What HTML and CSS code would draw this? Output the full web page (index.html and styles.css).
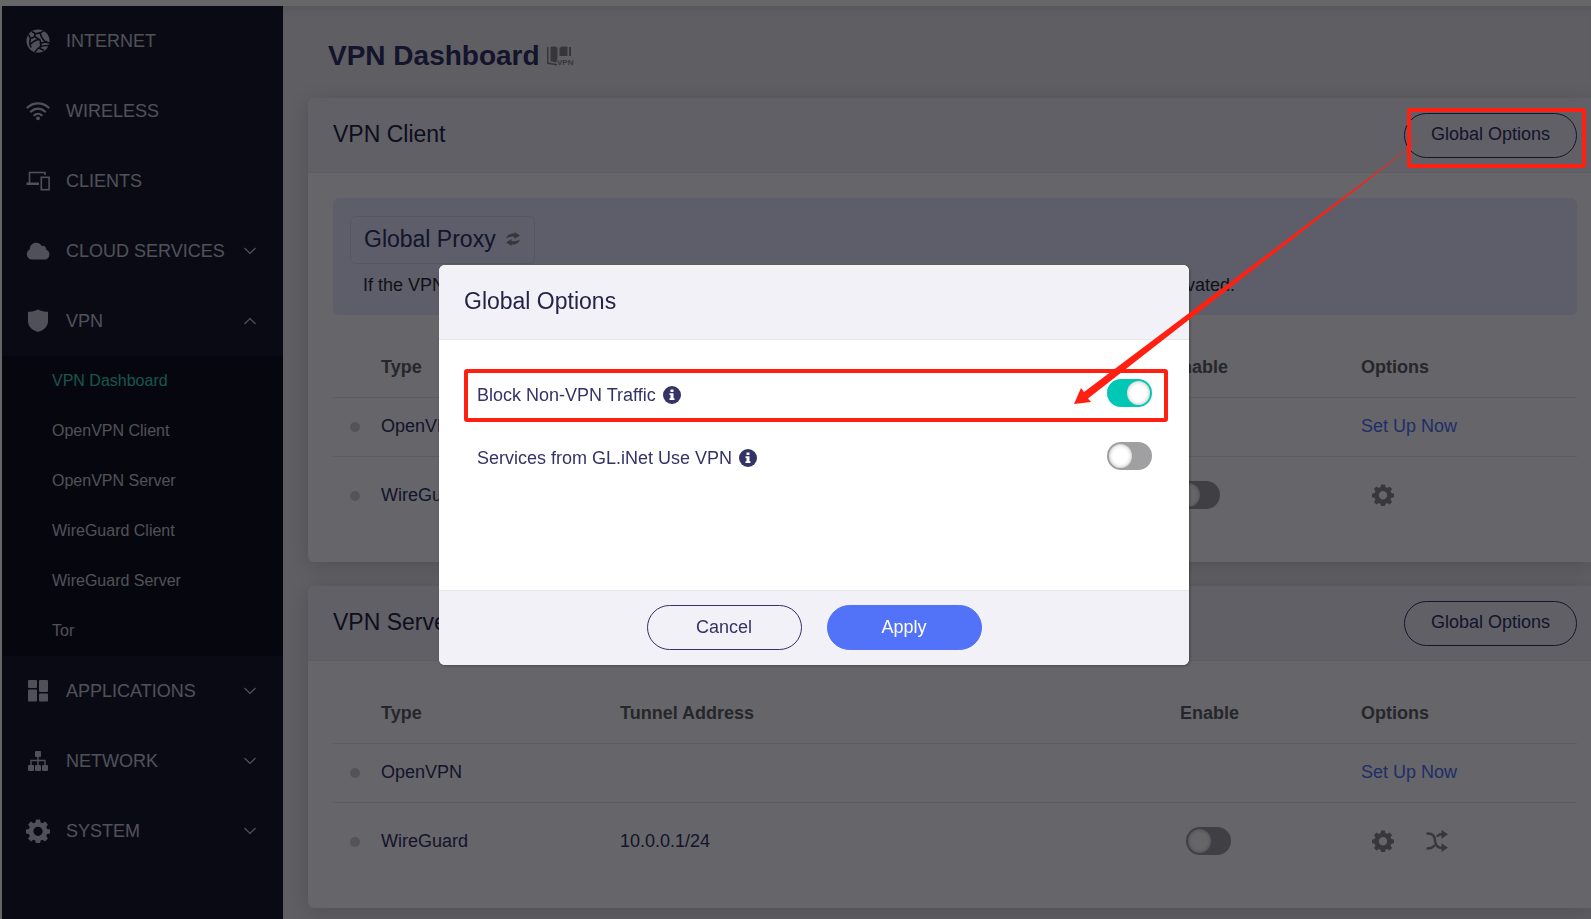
FILE: index.html
```
<!DOCTYPE html>
<html lang="en">
<head>
  <meta charset="UTF-8">
  <title>VPN Dashboard</title>
  <link rel="stylesheet" href="styles.css">
</head>
<body>

  <!-- shared icons -->
  <svg class="defs" width="0" height="0">
    <symbol id="gear" viewBox="0 0 24 24">
      <path fill-rule="evenodd" d="M10 .5h4l.6 2.900 2 .9 2.500-1.700 2.800 2.800-1.700 2.500.9 2 2.900.6v4l-2.900.6-.9 2 1.700 2.500-2.800 2.800-2.500-1.700-2 .9-.6 2.900h-4l-.6-2.900-2-.9-2.500 1.700-2.800-2.800 1.700-2.500-.9-2L0 14.500v-4l2.900-.6.9-2-1.700-2.500 2.800-2.800 2.500 1.700 2-.9zM12 7.700a4.600 4.600 0 1 0 0 9.200 4.600 4.600 0 0 0 0-9.200z"/>
    </symbol>
    <symbol id="down" viewBox="0 0 12 8">
      <path d="M.5 1L6 6.500 11.500 1" fill="none" stroke="currentColor" stroke-width="1.200"/>
    </symbol>
    <symbol id="info" viewBox="0 0 18 18">
      <circle cx="9" cy="9" r="9"/>
      <path fill="#fff" d="M7.500 3.500h3v2.500h-3zM6.500 7.200h4v5h1V14h-5v-1.800h1V9h-1z"/>
    </symbol>
  </svg>

  <div class="topbar"></div>

  <div class="layout">
    <nav class="sidebar">
      <a class="item" href="#">
        <svg class="icon" viewBox="0 0 24 24"><circle cx="12" cy="12" r="11.500"/><g fill="none" stroke="#1b1b2d" stroke-width="1.500"><path d="M3 5.500c0 2 1 3.500 2.500 3.500S9 7.500 9 5.500 7.500 3 6 3M9 5l6-1.500 3-2M14.500 3.500c-.5 3 .5 5 5 9.500l4 1M8.500 7.500L14 11l1 4-1 4M4.500 9C3.500 12 3.500 15 5 18.500M4 15.500c2-2 5-4.500 9-5M9 23c3-4.500 6-7 14-6.500M13.500 14.500l8-2M13 19l5 2.500"/></g></svg>
        INTERNET
      </a>
      <a class="item" href="#">
        <svg class="icon" viewBox="0 0 24 24"><g fill="none" stroke="currentColor" stroke-width="2.300" stroke-linecap="round"><path d="M1.500 8.500c6-5.500 15-5.500 21 0M5 12.500c4-3.800 10-3.800 14 0M8.500 16.200c2-1.900 5-1.900 7 0"/></g><circle cx="12" cy="19.300" r="1.900"/></svg>
        WIRELESS
      </a>
      <a class="item" href="#">
        <svg class="icon" viewBox="0 0 24 24"><g fill="none" stroke="currentColor" stroke-width="1.600"><path d="M3.500 14V3.500h15.500V6"/><rect x="15.300" y="8.300" width="7.800" height="12.400"/></g><path d="M.5 13.500h12.500v2.500H.5z"/></svg>
        CLIENTS
      </a>
      <a class="item" href="#">
        <svg class="icon" viewBox="0 0 24 24"><path d="M5.500 20.500a5.500 5.500 0 0 1-1.700-10.300C3.800 6 7 3.800 10 3.800c2.500 0 4.500 1.200 5.600 3.200 2.400-.8 4.800.8 4.600 3.700a5.100 5.100 0 0 1-1.500 9.800z"/></svg>
        CLOUD SERVICES
        <svg class="chevron"><use href="#down"/></svg>
      </a>
      <a class="item" href="#">
        <svg class="icon" viewBox="0 0 24 24"><path d="M12 .5c3 1.700 6.500 2.300 10 2.300V12c0 6-5 9.500-10 11-5-1.500-10-5-10-11V2.800C5.500 2.800 9 2.200 12 .5z"/></svg>
        VPN
        <svg class="chevron up"><use href="#down"/></svg>
      </a>
      <div class="submenu">
        <a class="active" href="#">VPN Dashboard</a>
        <a href="#">OpenVPN Client</a>
        <a href="#">OpenVPN Server</a>
        <a href="#">WireGuard Client</a>
        <a href="#">WireGuard Server</a>
        <a href="#">Tor</a>
      </div>
      <a class="item" href="#">
        <svg class="icon" viewBox="0 0 24 24"><rect x="2" y="1" width="9" height="8" rx="1"/><rect x="2" y="10.500" width="9" height="12" rx="1"/><rect x="13" y="1" width="9" height="12" rx="1"/><rect x="13" y="14.500" width="9" height="8" rx="1"/></svg>
        APPLICATIONS
        <svg class="chevron"><use href="#down"/></svg>
      </a>
      <a class="item" href="#">
        <svg class="icon" viewBox="0 0 24 24"><rect x="9" y="2" width="6" height="6" rx="1"/><rect x="2" y="16" width="6" height="6" rx="1"/><rect x="9" y="16" width="6" height="6" rx="1"/><rect x="16" y="16" width="6" height="6" rx="1"/><path d="M12 8v8M5 16v-4.500h14V16" fill="none" stroke="currentColor" stroke-width="1.400"/></svg>
        NETWORK
        <svg class="chevron"><use href="#down"/></svg>
      </a>
      <a class="item" href="#">
        <svg class="icon" viewBox="0 0 24 24"><use href="#gear"/></svg>
        SYSTEM
        <svg class="chevron"><use href="#down"/></svg>
      </a>
    </nav>

    <main class="main">
      <h1>
        VPN Dashboard
        <svg class="book" width="28" height="20" viewBox="0 0 28 20"><path d="M1 1h1.500v15.500l8.500 1.500v1.500L1 18zM4.500 1c3-.8 5-.5 7 .8V12l-1.500 5c-1.500-1-3.500-1.500-5.500-1.500zM13.500 1.800c2-1.300 5-1.600 8-.8v9h-8zM23 1h2v9h-2z"/><text x="11" y="19">VPN</text></svg>
      </h1>

      <section class="card">
        <div class="card-head">
          <h2>VPN Client</h2>
          <button class="btn">Global Options</button>
        </div>
        <div class="card-body">
          <div class="banner">
            <button class="proxy">
              Global Proxy
              <svg width="14" height="14" viewBox="0 0 14 14"><path d="M.3 6.500C.8 3 4 1.200 8.500 1.500V0L14 3.500 8.500 7V5C5 4.500 2.500 5 .3 6.500zM13.700 7.500c-.5 3.500-3.700 5.300-8.200 5V14L0 10.500 5.500 7v2c3.500.5 6 0 8.200-1.500z"/></svg>
            </button>
            <p>If the VPN client is on, all traffic of your devices will be sent through VPN tunnels when this policy is activated.</p>
          </div>
          <table class="client">
            <thead>
              <tr><th class="c-dot"></th><th class="c-type">Type</th><th></th><th class="c-enable">Enable</th><th class="c-options">Options</th></tr>
            </thead>
            <tbody>
              <tr><td><i class="dot"></i></td><td>OpenVPN</td><td></td><td></td><td><a href="#">Set Up Now</a></td></tr>
              <tr class="tall">
                <td><i class="dot"></i></td><td>WireGuard</td><td></td>
                <td><input class="switch" type="checkbox" aria-label="Enable WireGuard client"></td>
                <td><div class="tools"><svg><use href="#gear"/></svg></div></td>
              </tr>
            </tbody>
          </table>
        </div>
      </section>

      <section class="card">
        <div class="card-head">
          <h2>VPN Server</h2>
          <button class="btn">Global Options</button>
        </div>
        <div class="card-body">
          <table>
            <thead>
              <tr><th class="c-dot"></th><th class="c-type">Type</th><th>Tunnel Address</th><th class="c-enable">Enable</th><th class="c-options">Options</th></tr>
            </thead>
            <tbody>
              <tr><td><i class="dot"></i></td><td>OpenVPN</td><td></td><td></td><td><a href="#">Set Up Now</a></td></tr>
              <tr class="tall">
                <td><i class="dot"></i></td><td>WireGuard</td><td>10.0.0.1/24</td>
                <td><input class="switch" type="checkbox" aria-label="Enable WireGuard server"></td>
                <td>
                  <div class="tools">
                    <svg><use href="#gear"/></svg>
                    <svg viewBox="0 0 22 22"><g fill="none" stroke="currentColor" stroke-width="2.400" stroke-linecap="round"><path d="M1.500 3.500c5 0 7.500 2 7.500 7s3 7.500 8 7.500M1.500 18.500c3 0 5-.7 6.500-2.500M11.500 6c1.200-1.400 3-2 5.500-2"/></g><path d="M15.500 0L22 4.200l-6.500 4.600zM15.500 13.200L22 17.800 15.500 22z"/></svg>
                  </div>
                </td>
              </tr>
            </tbody>
          </table>
        </div>
      </section>
    </main>
  </div>

  <div class="overlay">
    <div class="modal" role="dialog" aria-labelledby="modalTitle">
      <h2 id="modalTitle">Global Options</h2>
      <div class="modal-body">
        <div class="option marked">
          <label for="block">Block Non-VPN Traffic</label>
          <svg class="info"><use href="#info"/></svg>
          <input class="switch" type="checkbox" id="block" checked>
        </div>
        <div class="option">
          <label for="services">Services from GL.iNet Use VPN</label>
          <svg class="info"><use href="#info"/></svg>
          <input class="switch" type="checkbox" id="services">
        </div>
      </div>
      <div class="modal-foot">
        <button class="btn">Cancel</button>
        <button class="btn primary">Apply</button>
      </div>
      <svg class="arrow" width="354" height="271" viewBox="0 0 354 271"><path d="M354 .5L10 259l-3-4-7 16 17-2-3-3.500z"/></svg>
    </div>
    <div class="mark"></div>
  </div>

</body>
</html>
```
FILE: styles.css
```
* { box-sizing: border-box; }

body {
  margin: 0;
  min-height: 100vh;
  display: flex;
  flex-direction: column;
  background: #fff;
  color: #333366;
  font-family: Arial, "Liberation Sans", sans-serif;
  font-size: 18px;
  line-height: 24px;
}

h1, h2, p { margin: 0; }
a { color: #5272f7; text-decoration: none; }
button { font: inherit; color: inherit; background: none; cursor: pointer; }
svg { fill: currentColor; }
.defs { position: absolute; }

.topbar { height: 6px; }

.layout {
  flex: 1;
  display: flex;
  padding-left: 2px;
}

/* sidebar */
.sidebar {
  flex: none;
  width: 281px;
  background: #1b1b2d;
}

.item {
  display: flex;
  align-items: center;
  height: 70px;
  padding: 0 27px 0 24px;
  color: #c9c9d6;
}

.icon {
  width: 24px;
  height: 24px;
  margin-right: 16px;
}

.chevron {
  width: 12px;
  height: 8px;
  margin-left: auto;
}

.up { transform: rotate(180deg); }

.submenu { background: #10111e; }

.submenu a {
  display: block;
  padding-left: 50px;
  font-size: 16px;
  line-height: 50px;
  color: #c9c9d0;
}

.submenu .active { color: #3cd2bd; }

/* content */
.main {
  flex: 1;
  padding-left: 25px;
  overflow: hidden;
  background: #ecebef;
  box-shadow: inset 0 8px 8px -6px rgba(0, 0, 0, .12);
}

h1 {
  display: flex;
  align-items: center;
  gap: 6px;
  padding: 34px 0 26px 20px;
  font-size: 28px;
  line-height: 32px;
}

.book { color: #8a8a8c; }
.book text { font-size: 8px; }

.card {
  margin-bottom: 24px;
  background: #fefdff;
  border-radius: 6px 0 0 6px;
  box-shadow: 0 4px 20px rgba(0, 0, 0, .15);
}

.card:last-child { margin-bottom: 11px; }

.card-head {
  display: flex;
  align-items: center;
  justify-content: space-between;
  height: 75px;
  padding: 0 14px 0 25px;
  background: #f2f1f7;
  border-bottom: 1px solid #e6e5eb;
  border-radius: 6px 0 0 0;
}

h2 {
  padding-bottom: 2px;
  font-size: 23px;
  font-weight: normal;
  color: #252447;
}

.btn {
  min-width: 155px;
  height: 45px;
  padding: 0 26px 2px;
  border: 1px solid #333366;
  border-radius: 23px;
}

.primary {
  color: #fff;
  background: #5272f7;
  border-color: #5272f7;
}

.card-body { padding: 0 14px 27px 25px; }

.banner {
  margin-top: 25px;
  padding: 18px 17px;
  background: #e8ebff;
  border-radius: 6px;
}

.proxy {
  display: flex;
  align-items: center;
  gap: 10px;
  height: 48px;
  padding: 0 14px 2px 13px;
  border: 1px solid #d6d7e4;
  border-radius: 6px;
  font-size: 23px;
}

.proxy svg { color: #8a8a8c; }

.banner p {
  padding: 9px 13px 0;
  color: #2c2c33;
}

/* tables */
table {
  width: 100%;
  margin-top: 22px;
  table-layout: fixed;
  border-collapse: collapse;
}

th, td {
  height: 60px;
  padding: 0;
  border-bottom: 1px solid #e8e7ed;
  text-align: left;
}

td { height: 59px; padding-bottom: 1px; }
th { color: #606266; }
.tall td { height: 79px; border: none; }

.c-dot { width: 48px; }
.c-type { width: 239px; }
.c-enable { width: 181px; }
.client .c-enable { width: 192px; }
.c-options { width: 216px; }

.dot {
  display: block;
  width: 10px;
  height: 10px;
  margin: 2px 0 0 17px;
  border-radius: 50%;
  background: #d2d0d5;
}

.tools {
  display: flex;
  gap: 32px;
  padding-left: 11px;
  color: #8a898e;
}

.tools svg { width: 22px; height: 22px; }

td .switch { margin-left: 6px; }

.switch {
  appearance: none;
  display: block;
  width: 45px;
  height: 28px;
  margin: 0;
  padding: 2px;
  border-radius: 14px;
  background: #a0a0a2;
}

.switch::before {
  content: "";
  display: block;
  width: 23px;
  height: 24px;
  border-radius: 50%;
  background: #fff;
  box-shadow: inset 0 0 4px rgba(0, 0, 0, .3);
}

.switch:checked { background: #00c8b5; }
.switch:checked::before { margin-left: 18px; }

/* dialog */
.overlay {
  position: fixed;
  inset: 0;
  display: flex;
  align-items: center;
  justify-content: center;
  padding: 11px 0 0 37px;
  background: rgba(0, 0, 5, .6);
}

.modal {
  position: relative;
  display: flex;
  flex-direction: column;
  width: 750px;
  min-height: 400px;
  background: #fff;
  border-radius: 6px;
  box-shadow: 1px 1px 3px rgba(0, 0, 0, .3);
}

.modal h2 {
  padding: 24px 25px 26px;
  background: #f2f1f7;
  border-bottom: 1px solid #e6e6eb;
  border-radius: 6px 6px 0 0;
}

.modal-body {
  flex: 1;
  padding: 24px 25px;
}

.option {
  position: relative;
  display: flex;
  align-items: center;
  height: 63px;
  padding: 0 12px 2px 13px;
}

.option .switch { margin: 0 0 3px auto; }
.info { width: 18px; height: 18px; margin-left: 7px; }

.modal-foot {
  display: flex;
  justify-content: center;
  gap: 25px;
  padding: 14px 14px 15px;
  background: #f2f1f7;
  border-top: 1px solid #e6e6eb;
  border-radius: 0 0 6px 6px;
}

/* red marks */
.marked::after,
.mark {
  content: "";
  position: absolute;
  border: 4px solid #ff2012;
  border-radius: 3px;
}

.marked::after { inset: 5px -4px 5px 0; pointer-events: none; }
.mark { top: 108px; right: 5px; width: 179px; height: 60px; }

.arrow {
  position: absolute;
  top: -132px;
  left: 635px;
  color: #ff2012;
  pointer-events: none;
}
```
